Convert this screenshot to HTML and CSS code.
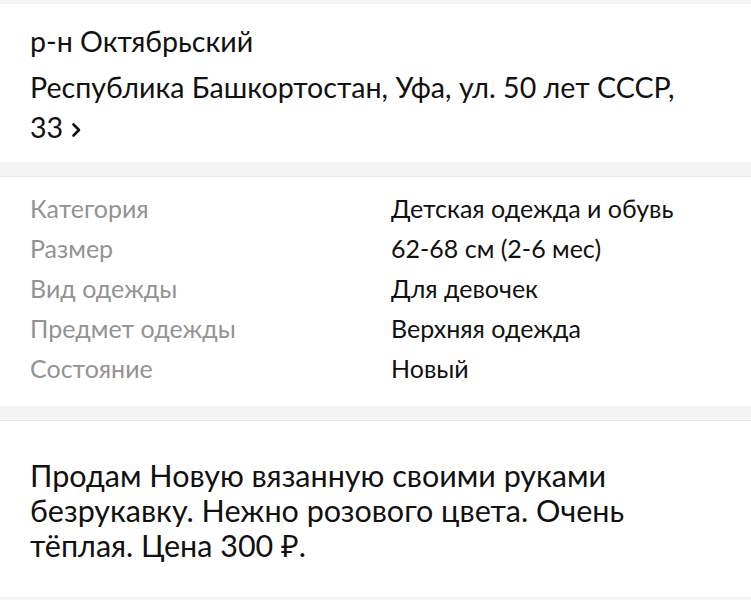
FILE: index.html
```html
<!DOCTYPE html>
<html lang="ru">
<head>
<meta charset="utf-8">
<link rel="stylesheet" href="styles.css">
</head>
<body>
<div class="page">
  <section class="card address">
    <div class="district">р-н Октябрьский</div>
    <div class="street">Республика Башкортостан, Уфа, ул. 50 лет СССР, <span class="nowrap">33<svg class="chev" width="13" height="18" viewBox="0 0 13 18"><path d="M3.5 3.5 L9 9 L3.5 14.5" fill="none" stroke="#111" stroke-width="2.6" stroke-linecap="round" stroke-linejoin="round"/></svg></span></div>
  </section>
  <div class="gap"></div>
  <section class="card params">
    <div class="row"><span class="label">Категория</span><span class="value">Детская одежда и обувь</span></div>
    <div class="row"><span class="label">Размер</span><span class="value">62-68 см (2-6 мес)</span></div>
    <div class="row"><span class="label">Вид одежды</span><span class="value">Для девочек</span></div>
    <div class="row"><span class="label">Предмет одежды</span><span class="value">Верхняя одежда</span></div>
    <div class="row"><span class="label">Состояние</span><span class="value">Новый</span></div>
  </section>
  <div class="gap"></div>
  <section class="card desc">
    <p>Продам Новую вязанную своими руками безрукавку. Нежно розового цвета. Очень тёплая. Цена 300 ₽.</p>
  </section>
  <div class="gap"></div>
</div>
</body>
</html>
```
FILE: styles.css
```css
html, body {
  margin: 0;
  padding: 0;
  background: #f4f4f4;
}
body {
  font-family: Lato, "Noto Sans", sans-serif;
  color: #111;
}
.page {
  padding-top: 4px;
}
.card {
  background: #fff;
}
.gap {
  height: 14px;
  background: #f4f4f4;
  border-bottom: 1px solid #e6e6e6;
}
.address {
  padding: 17px 30px 15px;
  font-size: 28.6px;
}
.district {
  line-height: 40px;
  margin-bottom: 6px;
}
.street {
  line-height: 40px;
  padding-right: 20px;
}
.nowrap {
  white-space: nowrap;
}
.chev {
  margin-left: 7px;
  vertical-align: -1px;
}
.params {
  padding: 11px 30px 18px;
  font-size: 25px;
}
.row {
  display: grid;
  grid-template-columns: 361px 1fr;
  line-height: 40px;
}
.label {
  color: #939393;
}
.desc {
  padding: 37px 30px 34px;
  font-size: 30.5px;
}
.desc p {
  margin: 0;
  line-height: 35px;
  padding-right: 50px;
}
```
